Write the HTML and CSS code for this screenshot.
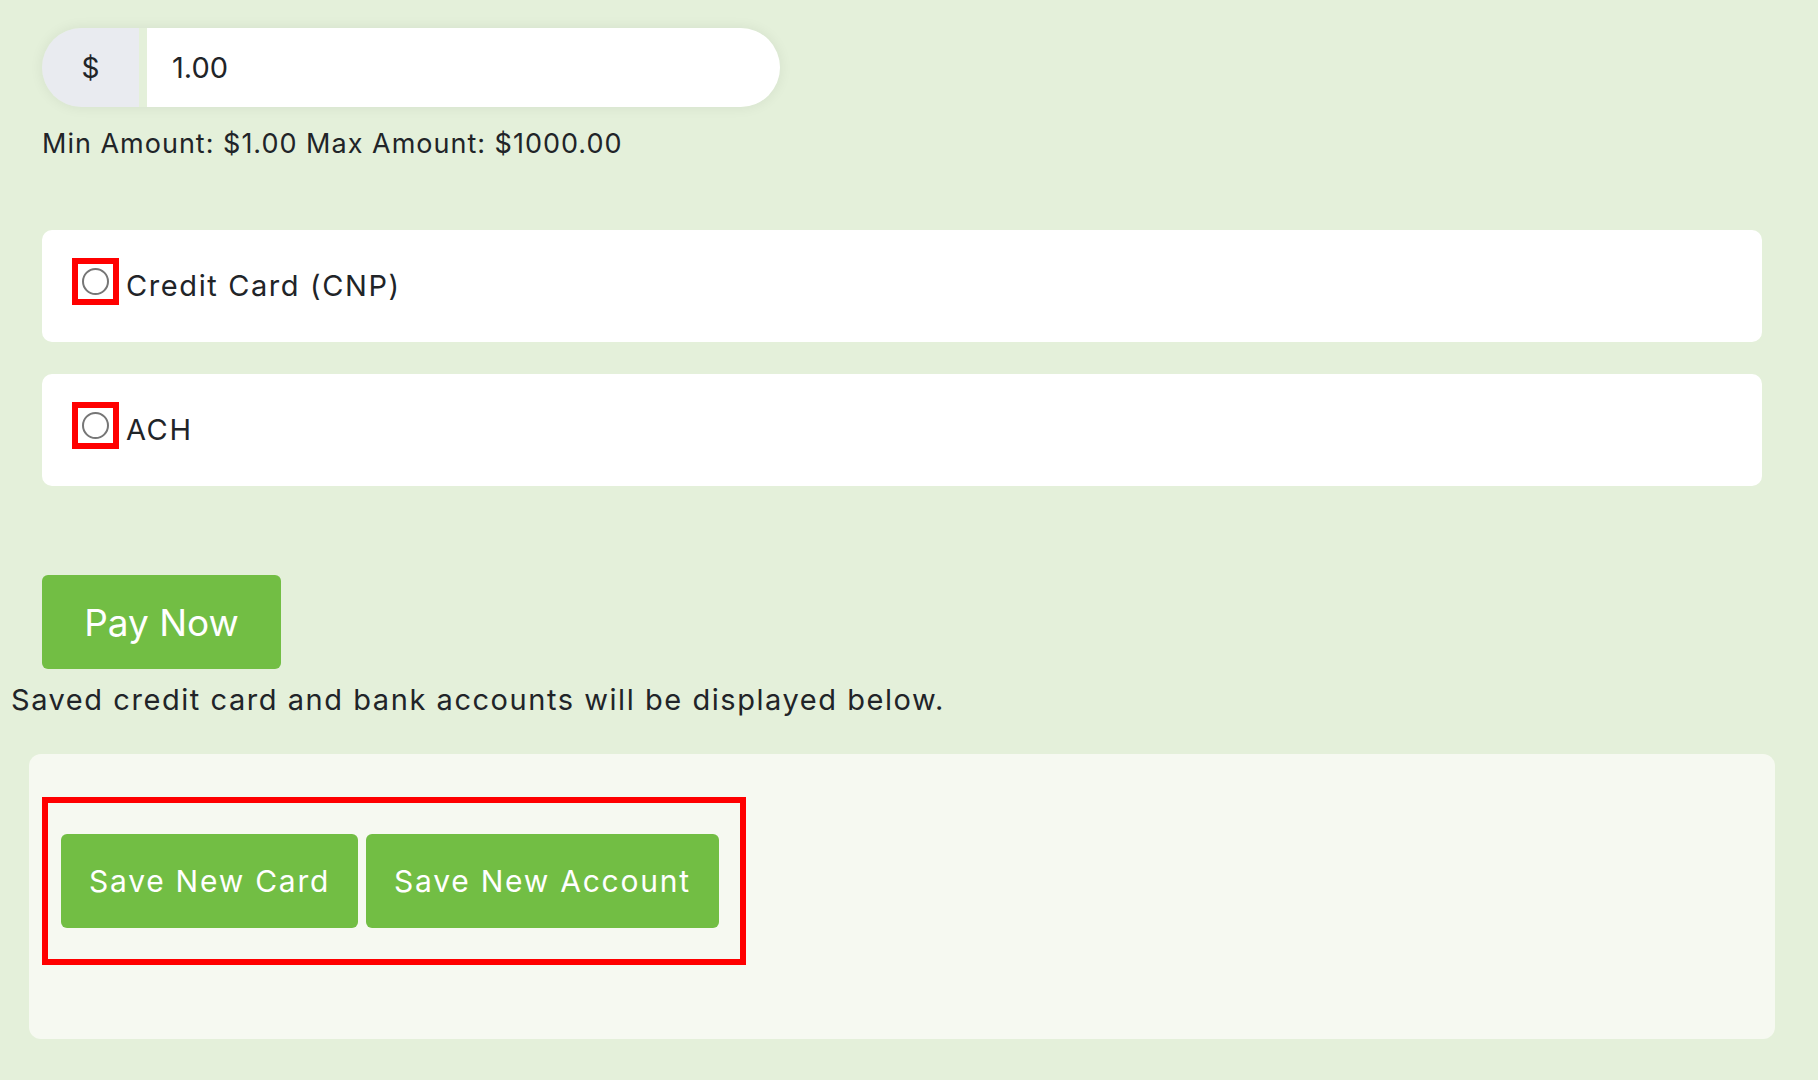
FILE: index.html
```html
<!DOCTYPE html>
<html lang="en">
<head>
<meta charset="utf-8">
<title>Payment</title>
<link rel="stylesheet" href="styles.css">
</head>
<body>
<div class="page">
  <section class="amount-section">
    <div class="input-group">
      <span class="addon">$</span>
      <span class="amount">1.00</span>
    </div>
    <p class="limits">Min Amount: $1.00 Max Amount: $1000.00</p>
    <div class="methods">
      <label class="method">
        <span class="radio-wrap"><span class="radio"></span></span>
        <span class="method-name">Credit Card (CNP)</span>
      </label>
      <label class="method">
        <span class="radio-wrap"><span class="radio"></span></span>
        <span class="method-name">ACH</span>
      </label>
    </div>
    <button class="btn btn-pay">Pay Now</button>
  </section>
  <p class="saved-note">Saved credit card and bank accounts will be displayed below.</p>
  <section class="saved-panel">
    <div class="highlight">
      <button class="btn btn-save">Save New Card</button>
      <button class="btn btn-save">Save New Account</button>
    </div>
  </section>
</div>
</body>
</html>
```
FILE: styles.css
```css
* { box-sizing: border-box; }
html, body { margin: 0; padding: 0; }
body {
  background: #e4f0da;
  font-family: Inter, "Open Sans", sans-serif;
  color: #212428;
  width: 1818px;
  height: 1080px;
  overflow: hidden;
}
.page { padding: 0; }
.amount-section { padding: 28px 56px 0 42px; }

.input-group {
  display: flex;
  width: 738px;
  height: 79px;
  border-radius: 40px;
  box-shadow: 0 0 14px rgba(0, 0, 0, 0.07);
  gap: 8px;
}
.addon {
  width: 97px;
  background: #e9ebf0;
  border-radius: 40px 0 0 40px;
  display: flex;
  align-items: center;
  justify-content: center;
  font-size: 28px;
  color: #212428;
}
.amount {
  flex: 1;
  background: #fff;
  border-radius: 0 40px 40px 0;
  display: flex;
  align-items: center;
  padding-left: 25px;
  font-size: 29px;
  color: #212428;
}
.limits {
  margin: 19px 0 68px;
  font-size: 27px;
  line-height: 36px;
  letter-spacing: 1px;
}
.methods { display: flex; flex-direction: column; gap: 32px; }
.method {
  display: flex;
  align-items: flex-start;
  height: 112px;
  padding: 28px 30px;
  background: #fff;
  border-radius: 10px;
}
.radio-wrap {
  width: 47px;
  height: 47px;
  border: 6px solid #ff0000;
  display: flex;
  align-items: center;
  justify-content: flex-start;
  padding-left: 4px;
}
.radio {
  width: 27px;
  height: 27px;
  border-radius: 50%;
  border: 2px solid #767676;
  background: #fff;
}
.method-name {
  font-size: 29px;
  line-height: 46px;
  padding-top: 5px;
  margin-left: 7px;
  letter-spacing: 1.6px;
}
.btn {
  border: none;
  background: #72be44;
  color: #fff;
  font-family: Inter, "Open Sans", sans-serif;
  border-radius: 6px;
  cursor: pointer;
}
.btn-pay {
  margin-top: 89px;
  width: 239px;
  height: 94px;
  font-size: 37px;
  display: block;
}
.saved-note {
  margin: 11px 0 34px 11px;
  font-size: 29px;
  line-height: 40px;
  letter-spacing: 1.55px;
}
.saved-panel {
  margin: 0 43px 0 29px;
  height: 285px;
  padding: 43px 13px 0;
  background: #f6f9f1;
  border-radius: 12px;
}
.highlight {
  display: inline-flex;
  gap: 8px;
  border: 6px solid #ff0000;
  padding: 31px 21px 31px 13px;
}
.btn-save {
  height: 94px;
  padding: 0 28px;
  font-size: 30px;
  letter-spacing: 1.75px;
}
```
